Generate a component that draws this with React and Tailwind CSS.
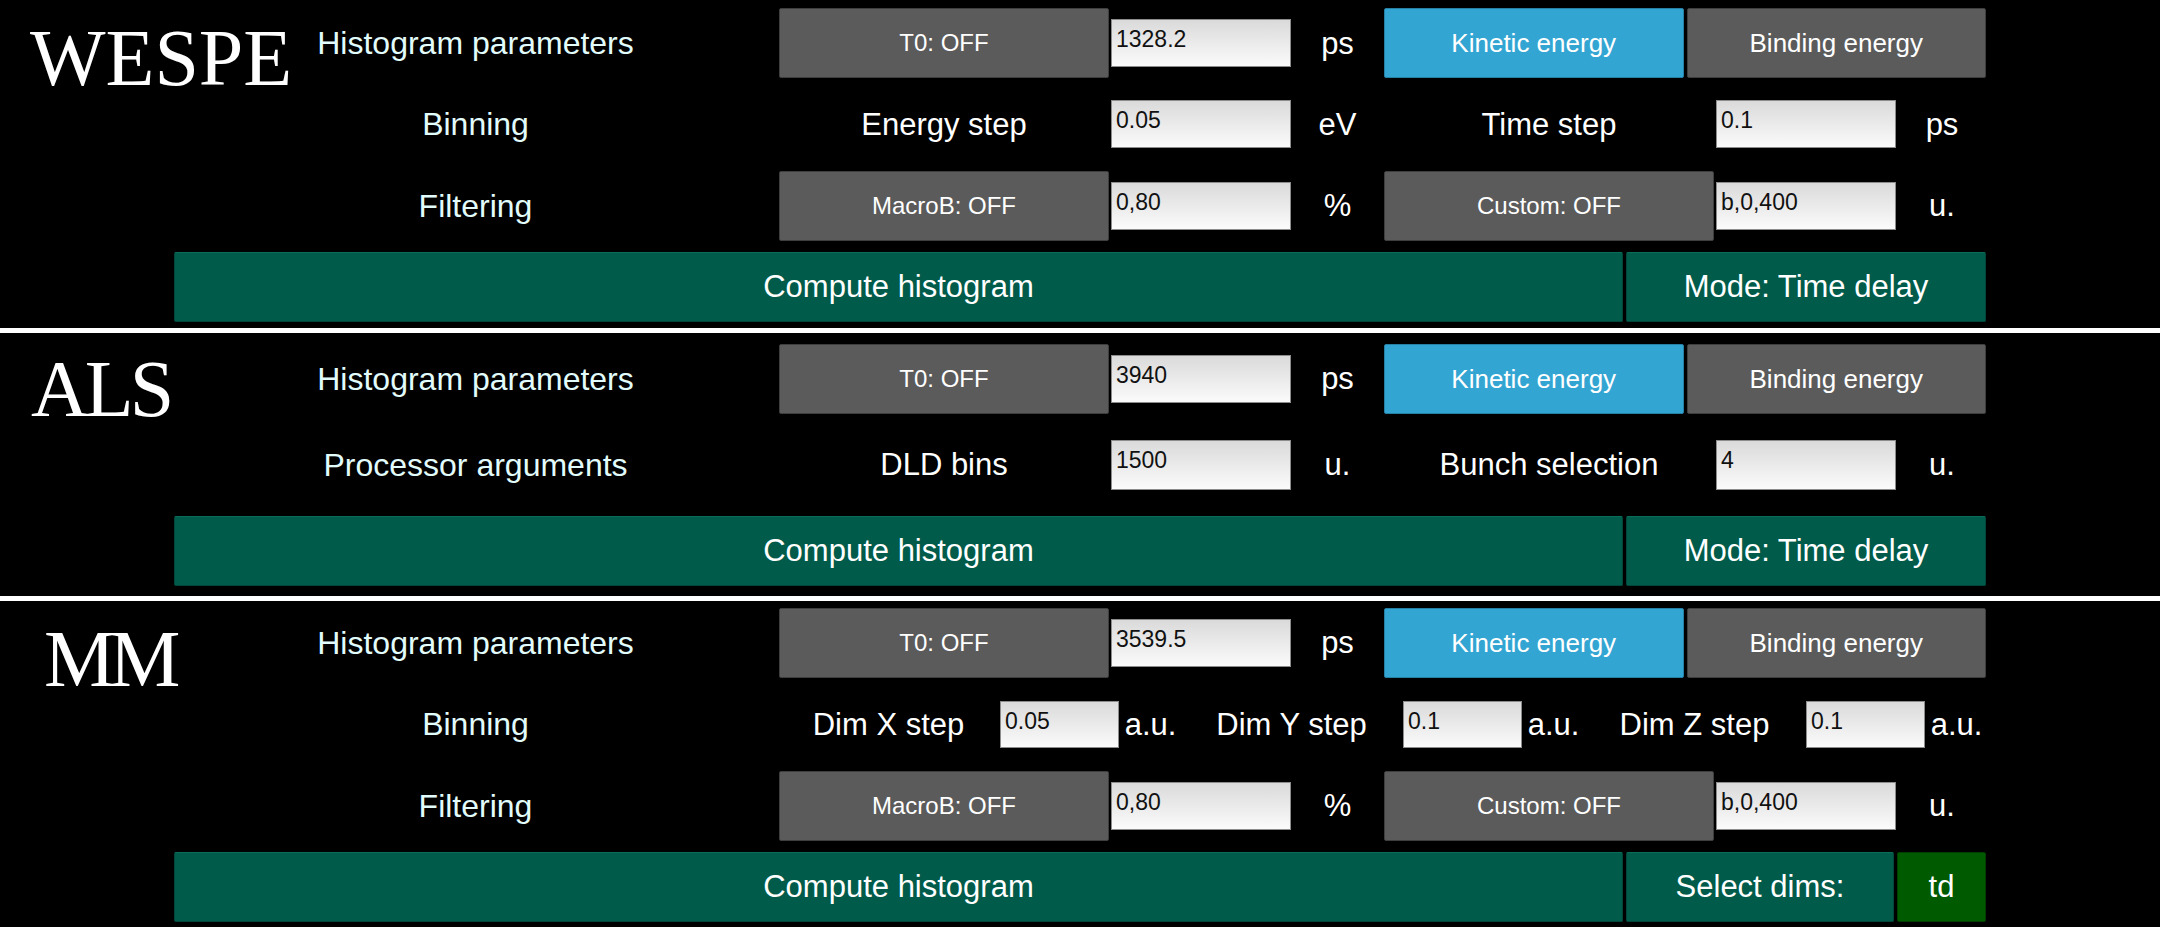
const tones = {
  gray: "bg-[#5b5b5b] border-[#3e3e3e]",
  blue: "bg-[#33a5d2] border-[#2580a6]",
  green: "bg-[#005b4a] border-[#00463a] border-t-[#0a6d5b]",
  dark: "bg-[#005a00] border-[#003f00]",
};

function Btn({ children, tone = "gray", className = "" }) {
  return (
    <div className={`flex items-center justify-center rounded-[2px] border leading-none text-white ${tones[tone]} ${className}`}>
      {children}
    </div>
  );
}

function Field({ value, className = "h-[48px]" }) {
  return (
    <div className={`self-center border border-[#8c8c8c] bg-linear-to-b from-[#dadada] to-[#fbfbfb] pl-[4px] pt-[8px] text-[23px] leading-none text-[#111] ${className}`}>
      {value}
    </div>
  );
}

function Label({ children }) {
  return <div className="flex items-center justify-center text-[32px] leading-none text-[#e2fbfb]">{children}</div>;
}

function Text({ children }) {
  return <div className="flex items-center justify-center whitespace-nowrap text-[31px] leading-none text-white">{children}</div>;
}

function Section({ title, titleClass, gridClass, children }) {
  return (
    <section className="flex items-start">
      <div className={`w-[174px] shrink-0 whitespace-nowrap font-['Liberation_Serif',serif] text-[80px] leading-none text-white ${titleClass}`}>
        {title}
      </div>
      <div className={`grid w-[1812px] auto-rows-[70px] grid-cols-[603px_330px_180px_89px_330px_180px_88px] gap-x-[2px] ${gridClass}`}>
        {children}
      </div>
    </section>
  );
}

function HistRow({ t0 }) {
  return (
    <>
      <Label>Histogram parameters</Label>
      <Btn className="text-[24px]">T0: OFF</Btn>
      <Field value={t0} />
      <Text>ps</Text>
      <div className="col-span-3 flex gap-[3px]">
        <Btn tone="blue" className="flex-1 text-[26px]">Kinetic energy</Btn>
        <Btn className="flex-1 text-[26px]">Binding energy</Btn>
      </div>
    </>
  );
}

function FilterRow() {
  return (
    <>
      <Label>Filtering</Label>
      <Btn className="text-[24px]">MacroB: OFF</Btn>
      <Field value="0,80" />
      <Text>%</Text>
      <Btn className="text-[24px]">Custom: OFF</Btn>
      <Field value="b,0,400" />
      <Text>u.</Text>
    </>
  );
}

function DimStep({ axis, value }) {
  return (
    <div className="grid grid-cols-[219px_119px_1fr] gap-x-[2px]">
      <Text>Dim {axis} step</Text>
      <Field value={value} className="h-[47px]" />
      <Text>a.u.</Text>
    </div>
  );
}

export default function App() {
  return (
    <div className="h-[927px] w-[2160px] overflow-hidden bg-black font-['Liberation_Sans',Arial,sans-serif]">
      <Section title="WESPE" titleClass="pt-[18px] pl-[30px]" gridClass="gap-y-[11.33px] pt-[8px] pb-[6px]">
        <HistRow t0="1328.2" />

        <Label>Binning</Label>
        <Text>Energy step</Text>
        <Field value="0.05" />
        <Text>eV</Text>
        <Text>Time step</Text>
        <Field value="0.1" />
        <Text>ps</Text>

        <FilterRow />

        <div className="col-span-7 flex gap-[3px]">
          <Btn tone="green" className="flex-1 text-[31px]">Compute histogram</Btn>
          <Btn tone="green" className="w-[360px] text-[31px]">Mode: Time delay</Btn>
        </div>
      </Section>

      <div className="h-[5px] bg-white" />

      <Section title="ALS" titleClass="pt-[16px] pl-[31px] tracking-[-4px]" gridClass="gap-y-[16px] pt-[11px] pb-[10px]">
        <HistRow t0="3940" />

        <Label>Processor arguments</Label>
        <Text>DLD bins</Text>
        <Field value="1500" className="h-[50px]" />
        <Text>u.</Text>
        <Text>Bunch selection</Text>
        <Field value="4" className="h-[50px]" />
        <Text>u.</Text>

        <div className="col-span-7 flex gap-[3px]">
          <Btn tone="green" className="flex-1 text-[31px]">Compute histogram</Btn>
          <Btn tone="green" className="w-[360px] text-[31px]">Mode: Time delay</Btn>
        </div>
      </Section>

      <div className="h-[5px] bg-white" />

      <Section title="MM" titleClass="pt-[18px] pl-[44px] tracking-[-6px]" gridClass="gap-y-[11.33px] pt-[7px] pb-[5px]">
        <HistRow t0="3539.5" />

        <Label>Binning</Label>
        <div className="col-span-6 grid grid-cols-3 gap-x-[2px]">
          <DimStep axis="X" value="0.05" />
          <DimStep axis="Y" value="0.1" />
          <DimStep axis="Z" value="0.1" />
        </div>

        <FilterRow />

        <div className="col-span-7 flex gap-[3px]">
          <Btn tone="green" className="flex-1 text-[31px]">Compute histogram</Btn>
          <Btn tone="green" className="w-[268px] text-[31px]">Select dims:</Btn>
          <Btn tone="dark" className="w-[89px] text-[31px]">td</Btn>
        </div>
      </Section>
    </div>
  );
}
